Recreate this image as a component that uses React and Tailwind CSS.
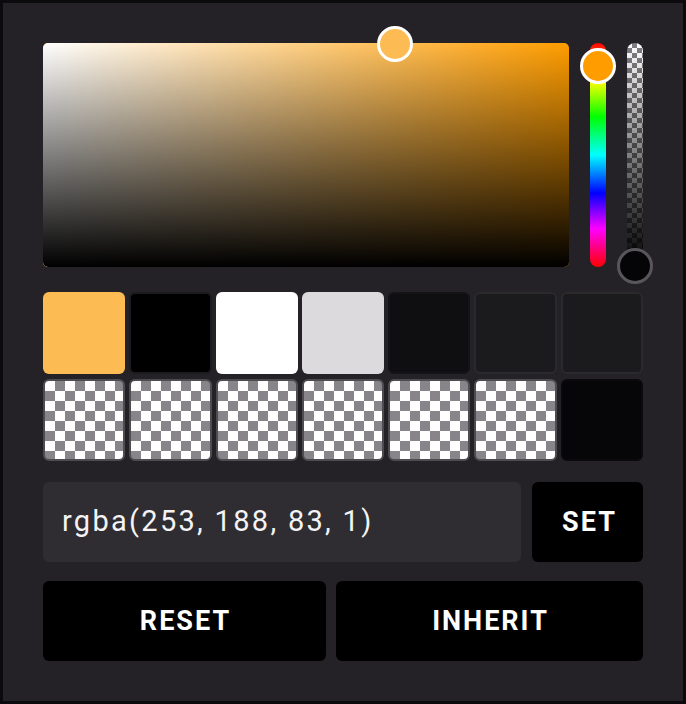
import React from "react";

const checker =
  "bg-[conic-gradient(#878589_25%,#ffffff_0_50%,#878589_0_75%,#ffffff_0)] bg-[length:20px_20px]";

function Swatch({ color, checkerOn, border }) {
  if (checkerOn) {
    return (
      <div
        className={`aspect-square rounded-[6px] border-2 border-[#4e4c51] ${checker}`}
      />
    );
  }
  return (
    <div
      className={`aspect-square rounded-[6px] border-2 ${border || "border-transparent"}`}
      style={{ backgroundColor: color }}
    />
  );
}

export default function App() {
  const row1 = [
    { color: "#fdbc53" },
    { color: "#000000", border: "border-[#1c1b1e]" },
    { color: "#ffffff" },
    { color: "#dcdadd" },
    { color: "#0f0e10", border: "border-[#141315]" },
    { color: "#1b1a1d", border: "border-[#2a292c]" },
    { color: "#1b1a1d", border: "border-[#2a292c]" },
  ];
  return (
    <div
      className="w-[686px] h-[704px] border-[3px] border-[#0b0a0d] bg-[#242227] p-[40px] flex flex-col"
      style={{ fontFamily: "Roboto, 'Liberation Sans', sans-serif" }}
    >
      {/* picker */}
      <div className="flex h-[224px] gap-[21px]">
        <div className="relative flex-1 rounded-[5px] bg-[#ff9d00]">
          <div className="absolute inset-0 rounded-[5px] bg-gradient-to-r from-white to-transparent" />
          <div className="absolute inset-0 rounded-[5px] bg-gradient-to-b from-transparent to-black" />
          <div className="absolute left-[352px] top-[1px] w-[36px] h-[36px] -translate-x-1/2 -translate-y-1/2 rounded-full border-[3px] border-white bg-[#fdbc53]" />
        </div>
        <div className="relative w-[16px] rounded-full bg-[linear-gradient(to_bottom,#ff0000_0%,#ffff00_17%,#00ff00_33%,#00ffff_50%,#0000ff_67%,#ff00ff_83%,#ff0000_100%)]">
          <div className="absolute left-1/2 top-[23px] w-[36px] h-[36px] -translate-x-1/2 -translate-y-1/2 rounded-full border-[3px] border-white bg-[#ff9d00]" />
        </div>
        <div className="relative w-[16px] rounded-full">
          <div className="absolute inset-0 rounded-full bg-[conic-gradient(#807e82_25%,#ffffff_0_50%,#807e82_0_75%,#ffffff_0)] bg-[length:10px_10px]" />
          <div className="absolute inset-0 rounded-full bg-gradient-to-b from-transparent to-black" />
          <div className="absolute left-1/2 top-[223px] w-[36px] h-[36px] -translate-x-1/2 -translate-y-1/2 rounded-full border-[3px] border-[#58565b] bg-[#050406]" />
        </div>
      </div>

      {/* swatches */}
      <div className="mt-[25px] grid grid-cols-7 gap-x-[4px] gap-y-[5px]">
        {row1.map((s, i) => (
          <Swatch key={i} {...s} />
        ))}
        {[0, 1, 2, 3, 4, 5].map((i) => (
          <Swatch key={"c" + i} checkerOn />
        ))}
        <Swatch color="#060508" border="border-[#0a090c]" />
      </div>

      {/* input row */}
      <div className="mt-[21px] flex gap-[11px] h-[80px]">
        <div className="flex-1 rounded-[6px] bg-[#2f2d31] flex items-center pl-[19px] text-[29px] tracking-[2.3px] text-[#f4f3f5]">
          rgba(253, 188, 83, 1)
        </div>
        <button className="w-[111px] rounded-[6px] bg-black pl-[4px] text-white text-[27px] font-bold tracking-[2px]">
          SET
        </button>
      </div>

      {/* buttons */}
      <div className="mt-[19px] flex gap-[10px] h-[80px]">
        <button className="w-[283px] rounded-[6px] bg-black pl-[2px] text-white text-[27px] font-bold tracking-[2px]">
          RESET
        </button>
        <button className="flex-1 rounded-[6px] bg-black pl-[2px] text-white text-[27px] font-bold tracking-[2px]">
          INHERIT
        </button>
      </div>
    </div>
  );
}
